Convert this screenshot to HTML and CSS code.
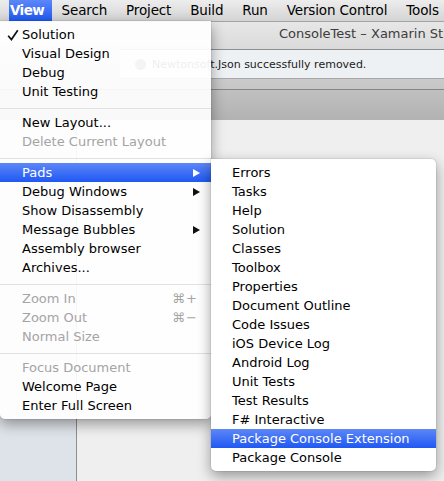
FILE: index.html
```html
<!DOCTYPE html>
<html>
<head>
<meta charset="utf-8">
<title>View menu</title>
<link rel="stylesheet" href="styles.css">
</head>
<body>
<div class="screen">
  <nav class="menubar">
    <span class="mb-item mb-active">View</span>
    <span class="mb-item">Search</span>
    <span class="mb-item">Project</span>
    <span class="mb-item">Build</span>
    <span class="mb-item">Run</span>
    <span class="mb-item">Version Control</span>
    <span class="mb-item">Tools</span>
  </nav>

  <div class="window">
    <div class="titlebar">ConsoleTest – Xamarin Studio</div>
    <div class="toolbar">
      <div class="status">
        <span class="status-icon"></span>
        <span class="status-text">Newtonsoft.Json successfully removed.</span>
      </div>
    </div>
    <div class="tabstrip"></div>
    <div class="workspace">
      <div class="sidebar"></div>
      <div class="editor"></div>
    </div>
  </div>

  <div class="menu view-menu">
    <div class="mi"><svg class="check" viewBox="0 0 12 12"><path d="M1.2 6.8 L4.4 10.6 L10.8 1.2"/></svg>Solution</div>
    <div class="mi">Visual Design</div>
    <div class="mi">Debug</div>
    <div class="mi">Unit Testing</div>
    <div class="sep"></div>
    <div class="mi">New Layout...</div>
    <div class="mi disabled">Delete Current Layout</div>
    <div class="sep"></div>
    <div class="mi selected">Pads<svg class="arrow" viewBox="0 0 7 8"><polygon points="0,0 7,4 0,8"/></svg></div>
    <div class="mi">Debug Windows<svg class="arrow" viewBox="0 0 7 8"><polygon points="0,0 7,4 0,8"/></svg></div>
    <div class="mi">Show Disassembly</div>
    <div class="mi">Message Bubbles<svg class="arrow" viewBox="0 0 7 8"><polygon points="0,0 7,4 0,8"/></svg></div>
    <div class="mi">Assembly browser</div>
    <div class="mi">Archives...</div>
    <div class="sep"></div>
    <div class="mi disabled">Zoom In<span class="shortcut">⌘+</span></div>
    <div class="mi disabled">Zoom Out<span class="shortcut">⌘−</span></div>
    <div class="mi disabled">Normal Size</div>
    <div class="sep"></div>
    <div class="mi disabled">Focus Document</div>
    <div class="mi">Welcome Page</div>
    <div class="mi">Enter Full Screen</div>
  </div>

  <div class="menu submenu">
    <div class="mi">Errors</div>
    <div class="mi">Tasks</div>
    <div class="mi">Help</div>
    <div class="mi">Solution</div>
    <div class="mi">Classes</div>
    <div class="mi">Toolbox</div>
    <div class="mi">Properties</div>
    <div class="mi">Document Outline</div>
    <div class="mi">Code Issues</div>
    <div class="mi">iOS Device Log</div>
    <div class="mi">Android Log</div>
    <div class="mi">Unit Tests</div>
    <div class="mi">Test Results</div>
    <div class="mi">F# Interactive</div>
    <div class="mi selected">Package Console Extension</div>
    <div class="mi">Package Console</div>
  </div>
</div>
</body>
</html>
```

FILE: styles.css
```css
html, body {
  margin: 0;
  padding: 0;
}
body {
  width: 444px;
  height: 481px;
  overflow: hidden;
  font-family: "DejaVu Sans", "Liberation Sans", sans-serif;
  font-size: 13px;
  color: #000;
}
.screen {
  position: relative;
  width: 444px;
  height: 481px;
  display: flex;
  flex-direction: column;
  overflow: hidden;
}

/* ---------- menu bar ---------- */
.menubar {
  height: 21px;
  flex: none;
  display: flex;
  padding-left: 9px;
  background: linear-gradient(#ededed, #d4d4d4);
  white-space: nowrap;
  font-size: 13.5px;
  letter-spacing: -0.15px;
}
.mb-item {
  line-height: 21px;
  padding: 0 9.5px;
  color: #000;
}
.mb-active {
  padding: 0 8px 0 1px;
  font-weight: bold;
  letter-spacing: -0.6px;
  color: #fff;
  background: linear-gradient(#5d87f7, #1f58f3);
}

/* ---------- window ---------- */
.window {
  flex: 1;
  display: flex;
  flex-direction: column;
  min-height: 0;
}
.titlebar {
  height: 27px;
  flex: none;
  border-top: 1px solid #a3a3a3;
  padding-left: 279px;
  line-height: 24px;
  color: #3c3c3c;
  white-space: nowrap;
  overflow: hidden;
  background: linear-gradient(#e7e7e7, #dadada);
}
.toolbar {
  height: 40px;
  flex: none;
  background: linear-gradient(#d6d6d6, #c6c6c6);
  border-bottom: 1px solid #868686;
}
.status {
  margin-left: 120px;
  height: 28px;
  border-top: 1px solid #8f8f8f;
  border-bottom: 1px solid #a9a9a9;
  background: #eef1f4;
  display: flex;
  align-items: center;
  gap: 6px;
  padding-left: 15px;
  font-size: 11px;
  color: #222;
  white-space: nowrap;
}
.status-icon {
  width: 11px;
  height: 11px;
  border-radius: 50%;
  background: #777;
}
.tabstrip {
  height: 30px;
  flex: none;
  background: linear-gradient(#c0c0c0, #b2b2b2);
}
.workspace {
  flex: 1;
  display: flex;
}
.sidebar {
  width: 76px;
  background: #dee3e9;
  border-right: 1px solid #8e8e8e;
}
.editor {
  flex: 1;
  background: #efefef;
}

/* ---------- menus ---------- */
.menu {
  position: absolute;
  background: rgba(255, 255, 255, 0.92);
  padding: 4px 0;
  box-shadow: 0 5px 14px rgba(0, 0, 0, 0.38), 0 0 0 1px rgba(0, 0, 0, 0.06);
  white-space: nowrap;
}
.view-menu {
  left: 0;
  top: 21px;
  width: 211px;
  border-radius: 0 0 5px 5px;
}
.submenu {
  left: 211px;
  top: 159px;
  width: 225px;
  background: #fff;
  border-radius: 0 5px 5px 5px;
}
.mi {
  position: relative;
  height: 19px;
  box-sizing: border-box;
  padding: 1px 0 0 22px;
  line-height: 18px;
  display: flex;
  align-items: center;
}
.submenu .mi {
  padding-left: 21px;
}
.mi.disabled {
  color: #a4a4a4;
}
.mi.selected {
  color: #fff;
  background: linear-gradient(#5d87f7, #1f58f3);
}
.check {
  position: absolute;
  left: 7px;
  top: 4px;
  width: 12px;
  height: 12px;
  fill: none;
  stroke: #111;
  stroke-width: 1.7;
}
.arrow {
  position: absolute;
  right: 11px;
  top: 6px;
  width: 7px;
  height: 8px;
  fill: #111;
}
.selected .arrow {
  fill: #fff;
}
.shortcut {
  position: absolute;
  right: 13px;
  top: 1px;
  letter-spacing: 1px;
}
.sep {
  height: 12px;
  box-sizing: border-box;
  padding-top: 7px;
}
.sep::after {
  content: "";
  display: block;
  height: 1px;
  background: #e1e1e1;
}
```
